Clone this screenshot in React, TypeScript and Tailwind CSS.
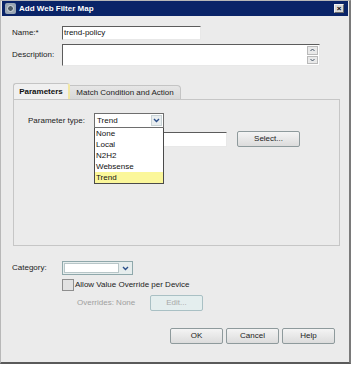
import React from 'react'

const font = { fontFamily: '"Liberation Sans", Arial, sans-serif' }

function Chevron() {
  return (
    <svg width="7" height="5" viewBox="0 0 7 5">
      <path d="M1 1 L3.5 3.5 L6 1" fill="none" stroke="#2b4f8a" strokeWidth="1.4" />
    </svg>
  )
}

function Btn({ label, w, disabled }: { label: string; w: string; disabled?: boolean }) {
  return (
    <div
      className={`${w} h-[16px] rounded-[2px] border flex items-center justify-center text-[8px] ${
        disabled
          ? 'border-[#a9c0c4] bg-[#e4eeee] text-[#a8a8a8]'
          : 'border-[#8e9a9c] bg-gradient-to-b from-[#f4f4f4] to-[#dcdcdc] text-[#222]'
      }`}
    >
      {label}
    </div>
  )
}

export default function App() {
  const items = ['None', 'Local', 'N2H2', 'Websense', 'Trend']
  return (
    <div className="w-[352px] h-[365px] bg-white" style={font}>
      <div className="w-[351px] h-[364px] bg-[#ebebeb] border border-[#b8b8b8] border-b-2 border-b-[#5a5a5a] border-r-2 border-r-[#7a7a7a] flex flex-col">
        {/* title bar */}
        <div className="h-[15px] mx-[1px] bg-[#0a2468] flex items-center pl-[3px] pr-[4px]">
          <div className="w-[11px] h-[11px] rounded-[2px] bg-[#9aa7b4] flex items-center justify-center">
            <div className="w-[7px] h-[7px] rounded-full bg-[#4d5a66] border border-[#d9e0e6]" />
          </div>
          <span className="ml-[3px] text-white font-bold text-[8px]">Add Web Filter Map</span>
          <div className="ml-auto w-[10px] h-[9px] bg-[#d8d8d8] border border-[#f4f4f4] border-b-[#6a6a6a] border-r-[#6a6a6a] flex items-center justify-center text-[8px] leading-none font-bold text-black">
            ×
          </div>
        </div>

        {/* name */}
        <div className="flex items-center mt-[10px] pl-[11px]">
          <span className="w-[50px] text-[8px] text-[#222]">Name:*</span>
          <div className="w-[139px] h-[14px] bg-white border border-[#e8e8e8] border-t-[#5c5c5c] border-l-[#5c5c5c] flex items-center pl-[1px] text-[8px] text-[#111]">
            trend-policy
          </div>
        </div>

        {/* description */}
        <div className="flex items-center mt-[4px] pl-[11px]">
          <span className="w-[50px] text-[8px] text-[#222]">Description:</span>
          <div className="w-[258px] h-[22px] bg-white border border-[#e8e8e8] border-t-[#5c5c5c] border-l-[#5c5c5c] flex justify-end pr-[1px] py-[1px]">
            <div className="flex flex-col gap-[1px]">
              <div className="w-[11px] h-[9px] bg-[#e9e9e9] border border-[#b9b9b9] flex items-center justify-center">
                <svg width="5" height="4" viewBox="0 0 5 4">
                  <path d="M0.5 3 L2.5 1 L4.5 3" fill="none" stroke="#456" strokeWidth="1" />
                </svg>
              </div>
              <div className="w-[11px] h-[9px] bg-[#e9e9e9] border border-[#b9b9b9] flex items-center justify-center">
                <svg width="5" height="4" viewBox="0 0 5 4">
                  <path d="M0.5 1 L2.5 3 L4.5 1" fill="none" stroke="#456" strokeWidth="1" />
                </svg>
              </div>
            </div>
          </div>
        </div>

        {/* tabs */}
        <div className="flex items-end mt-[17px] pl-[12px] h-[16px]">
          <div className="h-[16px] w-[57px] bg-[#f0f0f0] border border-[#c4c4c4] border-b-0 border-r-2 border-r-[#f2e7a2] rounded-t-[3px] flex items-center justify-center text-[8px] font-bold text-[#111]">
            Parameters
          </div>
          <div className="h-[14px] w-[111px] bg-gradient-to-b from-[#e6e6e6] to-[#d8d8d8] border border-[#c4c4c4] border-b-0 border-l-0 rounded-tr-[4px] flex items-center justify-center text-[8px] text-[#222]">
            Match Condition and Action
          </div>
        </div>

        {/* panel */}
        <div className="ml-[12px] w-[327px] h-[147px] border border-[#c6c6c6] bg-[#ebebeb]">
          <div className="flex items-center mt-[13px] pl-[14px]">
            <span className="w-[66px] text-[8px] text-[#222]">Parameter type:</span>
            <div className="relative">
              <div className="w-[70px] h-[15px] bg-white border border-[#6e6e6e] flex items-center">
                <span className="pl-[2px] text-[8px] text-[#111] flex-1">Trend</span>
                <div className="w-[11px] h-[11px] mr-[1px] bg-[#e9eef0] border border-[#c9d3d6] flex items-center justify-center">
                  <Chevron />
                </div>
              </div>
              <div className="absolute left-0 top-[15px] w-[70px] bg-white border border-[#4a4a4a] border-t-0 z-10 flex flex-col">
                {items.map((it) => (
                  <div
                    key={it}
                    className={`h-[11px] flex items-center pl-[1px] text-[8px] text-[#111] ${
                      it === 'Trend' ? 'bg-[#fbf79a]' : ''
                    }`}
                  >
                    {it}
                  </div>
                ))}
              </div>
            </div>
          </div>
          <div className="flex items-center mt-[3px] pl-[80px]">
            <div className="w-[133px] h-[15px] bg-white border border-[#e8e8e8] border-t-[#5c5c5c] border-l-[#5c5c5c]" />
            <div className="ml-[10px]">
              <Btn label="Select..." w="w-[63px]" />
            </div>
          </div>
        </div>

        {/* category */}
        <div className="flex items-center mt-[15px] pl-[11px]">
          <span className="w-[50px] text-[8px] text-[#222]">Category:</span>
          <div className="w-[71px] h-[14px] border border-[#8fa8ab] bg-[#e6eded] flex items-center p-[1px]">
            <div className="flex-1 h-full bg-white border border-[#b8c6c8]" />
            <div className="w-[11px] h-full ml-[1px] flex items-center justify-center">
              <Chevron />
            </div>
          </div>
        </div>

        {/* checkbox */}
        <div className="flex items-center mt-[4px] pl-[61px]">
          <div className="w-[12px] h-[12px] border border-[#8e8e8e] bg-[#e2e2e2]" />
          <span className="ml-[1px] text-[8px] text-[#222]">Allow Value Override per Device</span>
        </div>

        {/* overrides */}
        <div className="flex items-center mt-[4px] pl-[76px]">
          <span className="w-[73px] text-[8px] text-[#a0a0a0]">Overrides: None</span>
          <Btn label="Edit..." w="w-[53px]" disabled />
        </div>

        {/* buttons */}
        <div className="flex items-center mt-[17px] pl-[169px] gap-[3px]">
          <Btn label="OK" w="w-[53px]" />
          <Btn label="Cancel" w="w-[53px]" />
          <Btn label="Help" w="w-[53px]" />
        </div>
      </div>
    </div>
  )
}
